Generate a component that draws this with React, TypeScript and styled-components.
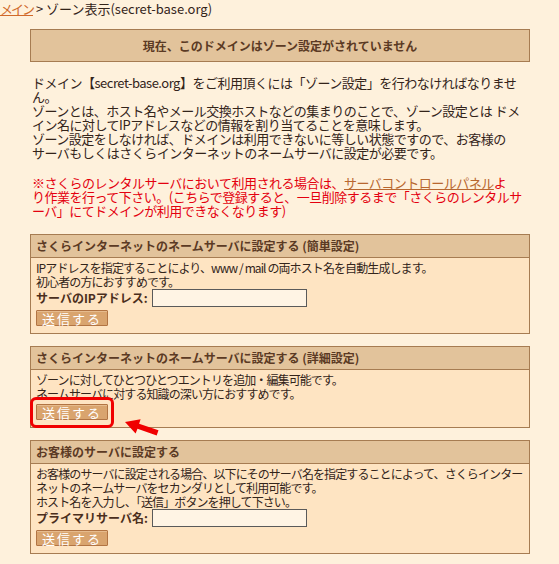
import React from "react";
import styled, { createGlobalStyle } from "styled-components";

const GlobalStyle = createGlobalStyle`
  html, body {
    margin: 0;
    padding: 0;
    background: #fef1dc;
  }
  body {
    font-family: "Noto Sans CJK JP", "Noto Sans", sans-serif;
    color: #33241a;
  }
`;

const Page = styled.div`
  width: 559px;
  min-height: 564px;
  background: #fef1dc;
  overflow: hidden;
`;

const Breadcrumb = styled.div`
  font-size: 13px;
  line-height: 15px;
  padding-top: 1px;
  white-space: nowrap;
  color: #33241a;
`;

const CrumbLink = styled.a`
  color: #d0692a;
  text-decoration: underline;
  letter-spacing: -2px;
`;

const Notice = styled.div`
  box-sizing: border-box;
  margin: 13px 0 0 30px;
  width: 500px;
  height: 33px;
  border: 1px solid #a67c52;
  background: #e2c39b;
  text-align: center;
  font-size: 12px;
  font-weight: bold;
  line-height: 31px;
  color: #5b3a24;
`;

const Intro = styled.p<{ $red?: boolean }>`
  margin: ${(p) => (p.$red ? "16px" : "14px")} 0 0 32px;
  font-size: 13px;
  line-height: 14px;
  letter-spacing: -0.5px;
  white-space: nowrap;
  color: ${(p) => (p.$red ? "#e4000f" : "#33241a")};
`;

const PanelLink = styled.a`
  color: #b8672f;
  text-decoration: underline;
`;

const Boxes = styled.div`
  margin: 16px 0 0 30px;
  width: 500px;
  display: flex;
  flex-direction: column;
  gap: 12px;
`;

const Box = styled.section`
  box-sizing: border-box;
  width: 500px;
  border: 1px solid #a67c52;
  background: #fee4c2;
`;

const BoxHeader = styled.h2`
  margin: 0;
  height: 22px;
  padding: 0 5px;
  background: #e2c39b;
  border-bottom: 1px solid #a67c52;
  font-size: 12px;
  font-weight: bold;
  line-height: 22px;
  color: #5b3a24;
  white-space: nowrap;
`;

const BoxBody = styled.div`
  padding: 3px 5px 7px;
  font-size: 12px;
  line-height: 14px;
  color: #33241a;
`;

const BodyText = styled.p`
  margin: 0;
  letter-spacing: -0.9px;
  white-space: nowrap;
`;

const FormRow = styled.div`
  display: flex;
  align-items: center;
  gap: 4px;
  height: 18px;
`;

const Label = styled.label`
  font-size: 12px;
  font-weight: bold;
  color: #4b2e1c;
  white-space: nowrap;
`;

const TextInput = styled.input`
  box-sizing: border-box;
  width: 155px;
  height: 18px;
  margin: 0;
  padding: 0 3px;
  border: 1px solid #5a5a5a;
  background: #fff4e4;
  font-size: 12px;
`;

const ButtonWrap = styled.div`
  position: relative;
  width: 72px;
  margin-top: 3px;
`;

const SubmitButton = styled.button`
  box-sizing: border-box;
  display: block;
  width: 72px;
  height: 16px;
  margin: 0;
  padding: 0;
  border: 1px solid #b27443;
  border-radius: 1px;
  background: #d9a46e;
  box-shadow: inset 0 1px 0 #e6bb8d;
  color: #ffffff;
  font-family: "Noto Sans CJK JP", sans-serif;
  font-size: 13px;
  font-weight: normal;
  line-height: 13px;
  letter-spacing: 2px;
  cursor: pointer;
`;

const Highlight = styled.span`
  position: absolute;
  left: -6px;
  top: -7px;
  width: 84px;
  height: 31px;
  box-sizing: border-box;
  border: 3px solid #f00000;
  border-radius: 6px;
  pointer-events: none;
`;

const Arrow = styled.svg`
  position: absolute;
  left: 85px;
  top: 11px;
  width: 42px;
  height: 24px;
  pointer-events: none;
`;

const Button: React.FC<{ marked?: boolean }> = ({ marked }) => (
  <ButtonWrap>
    <SubmitButton type="button">送信する</SubmitButton>
    {marked && (
      <>
        <Highlight />
        <Arrow viewBox="0 0 42 24">
          <polygon
            points="4,7 19.6,4.2 18.1,8.8 37.5,15.3 35.7,20.6 16.5,13.8 14.6,18.4"
            fill="#f00000"
          />
        </Arrow>
      </>
    )}
  </ButtonWrap>
);

export default function App() {
  return (
    <Page>
      <GlobalStyle />
      <Breadcrumb>
        <CrumbLink href="#">メイン</CrumbLink> &gt; ゾーン表示(secret-base.org)
      </Breadcrumb>
      <Notice>現在、このドメインはゾーン設定がされていません</Notice>
      <Intro>
        ドメイン【secret-base.org】をご利用頂くには「ゾーン設定」を行わなければなりませ
        <br />
        ん。
        <br />
        ゾーンとは、ホスト名やメール交換ホストなどの集まりのことで、ゾーン設定とは ドメ
        <br />
        イン名に対してIPアドレスなどの情報を割り当てることを意味します。
        <br />
        ゾーン設定をしなければ、ドメインは利用できないに等しい状態ですので、お客様の
        <br />
        サーバもしくはさくらインターネットのネームサーバに設定が必要です。
      </Intro>
      <Intro $red>
        ※さくらのレンタルサーバにおいて利用される場合は、
        <PanelLink href="#">サーバコントロールパネル</PanelLink>よ
        <br />
        り作業を行って下さい。(こちらで登録すると、一旦削除するまで「さくらのレンタルサ
        <br />
        ーバ」にてドメインが利用できなくなります)
      </Intro>
      <Boxes>
        <Box>
          <BoxHeader>さくらインターネットのネームサーバに設定する (簡単設定)</BoxHeader>
          <BoxBody>
            <BodyText>
              IPアドレスを指定することにより、www / mail の両ホスト名を自動生成します。
              <br />
              初心者の方におすすめです。
            </BodyText>
            <FormRow>
              <Label htmlFor="ip">サーバのIPアドレス:</Label>
              <TextInput id="ip" type="text" />
            </FormRow>
            <Button />
          </BoxBody>
        </Box>
        <Box>
          <BoxHeader>さくらインターネットのネームサーバに設定する (詳細設定)</BoxHeader>
          <BoxBody>
            <BodyText>
              ゾーンに対してひとつひとつエントリを追加・編集可能です。
              <br />
              ネームサーバに対する知識の深い方におすすめです。
            </BodyText>
            <Button marked />
          </BoxBody>
        </Box>
        <Box>
          <BoxHeader>お客様のサーバに設定する</BoxHeader>
          <BoxBody>
            <BodyText>
              お客様のサーバに設定される場合、以下にそのサーバ名を指定することによって、さくらインター
              <br />
              ネットのネームサーバをセカンダリとして利用可能です。
              <br />
              ホスト名を入力し、「送信」ボタンを押して下さい。
            </BodyText>
            <FormRow>
              <Label htmlFor="primary">プライマリサーバ名:</Label>
              <TextInput id="primary" type="text" />
            </FormRow>
            <Button />
          </BoxBody>
        </Box>
      </Boxes>
    </Page>
  );
}
